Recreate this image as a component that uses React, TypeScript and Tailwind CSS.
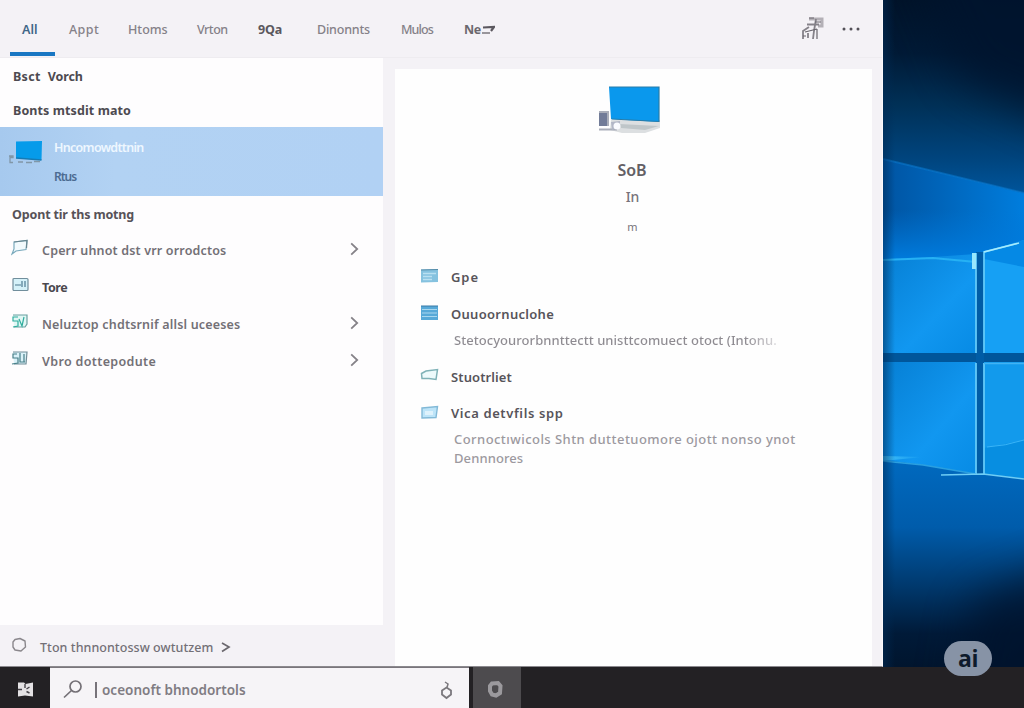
import React from 'react';
import clsx from 'clsx';

const tabs = [
  { label: 'All', cls: 'w-[45px] pl-[12px] text-[#3f6788] font-semibold', active: true },
  { label: 'Appt', cls: 'w-[59px] font-medium text-[#858188] tracking-[0.4px]' },
  { label: 'Htoms', cls: 'w-[69px] font-medium text-[#858188] tracking-[0px]' },
  { label: 'Vrton', cls: 'w-[61px] font-medium text-[#858188] tracking-[-0.5px]' },
  { label: '9Qa', cls: 'w-[59px] text-[#5b585e] font-bold tracking-[-0.2px]' },
  { label: 'Dinonnts', cls: 'w-[84px] font-medium text-[#858188] tracking-[-0.2px]' },
  { label: 'Mulos', cls: 'w-[63px] font-medium text-[#858188] tracking-[-0.9px]' },
];

type IconKind = 'flag' | 'panel' | 'sync' | 'disk';

const RowIcon: React.FC<{ kind: IconKind }> = ({ kind }) => (
  <svg width="18" height="18" viewBox="0 0 18 18" fill="none" strokeWidth="1.2" className="shrink-0">
    {kind === 'flag' && (
      <>
        <path d="M3 3 L16 1.5 L15 10.5 L5 12 L1 15 L3 10 Z" fill="#f2fafd" stroke="#7aaabd" />
        <path d="M3 3L16 1.5L15.5 9" stroke="#68858f" />
      </>
    )}
    {kind === 'panel' && (
      <>
        <rect x="2" y="2.5" width="15" height="12" rx="1" fill="#d5f1f9" stroke="#718e9c" />
        <path d="M4 9h6M11 5v6M14 5v6" stroke="#4e7a90" />
      </>
    )}
    {kind === 'sync' && (
      <>
        <path d="M2 2h14v9l-2 3H3" fill="#e1f7f5" stroke="#69a09f" />
        <path d="M7 4H2v4h5v5l-5 1M8 6l3 7 2-9" stroke="#2fad9d" />
      </>
    )}
    {kind === 'disk' && (
      <>
        <path d="M2 2h14l-1 12H3" fill="#daf1f8" stroke="#718d97" />
        <path d="M6 4H2v4h5v5l-6 1M9 3v9h5M13 4v8" stroke="#477f88" />
      </>
    )}
  </svg>
);

const Chevron: React.FC = () => (
  <svg width="9" height="14" viewBox="0 0 9 14" fill="none" stroke="#858288" strokeWidth="1.8" className="shrink-0">
    <path d="M1.2 1.3L7.2 7L1.2 12.7" />
  </svg>
);

const suggestions: { label: string; icon: IconKind; arrow: boolean; cls: string }[] = [
  { label: 'Cperr uhnot dst vrr orrodctos', icon: 'flag', arrow: true, cls: 'font-semibold text-[#737076] tracking-[0.17px] -ml-px' },
  { label: 'Tore', icon: 'panel', arrow: false, cls: 'font-bold text-[#4b484e] tracking-[-0.4px]' },
  { label: 'Neluztop chdtsrnif allsl uceeses', icon: 'sync', arrow: true, cls: 'font-semibold text-[#737076] tracking-[0.18px]' },
  { label: 'Vbro dottepodute', icon: 'disk', arrow: true, cls: 'font-semibold text-[#737076] tracking-[0.35px]' },
];

const ResultsPane: React.FC = () => (
  <section className="flex w-[383px] shrink-0 flex-col bg-[#f4f2f6]">
    <div className="flex-1 bg-[#fefdfe]">
      <h2 className="flex h-[35px] items-center gap-[7px] pt-[3px] pl-[13px] text-[12.5px] font-bold text-[#4d4a50]">
        <span className="tracking-[0.3px]">Bsct</span>
        <span className="tracking-[-0.1px]">Vorch</span>
      </h2>
      <h2 className="flex h-[34px] items-center pl-[13px] pt-[2px] text-[12.5px] font-bold text-[#4d4a50] tracking-[0.1px]">Bonts mtsdit mato</h2>
      <button className="flex h-[69px] w-[383px] bg-[linear-gradient(90deg,#a6c9ee,#b2d2f3_30%,#b1d1f4)] pl-[8px] text-left">
        <svg width="35" height="27" viewBox="0 0 35 27" className="mt-[12px] shrink-0">
          <path d="M8 2.5L34 2l-.5 19L8 19z" fill="#069bea" />
          <path d="M8 19l25.5 2" stroke="#157bb5" strokeWidth="1.5" />
          <path d="M1 17h4v1.5H2v5h3M10 23h5M18 23.5h6M26 22.5h6" fill="none" stroke="#8197a8" strokeWidth="1.3" />
        </svg>
        <span className="ml-[11px] flex flex-col">
          <span className="mt-[11px] h-[20px] text-[12.5px] leading-[19px] font-semibold text-[#eef7ff] tracking-[-0.7px]">Hncomowdttnin</span>
          <span className="mt-[9px] text-[12px] leading-[19px] font-semibold text-[#4c6b92] tracking-[-1px]">Rtus</span>
        </span>
      </button>
      <h2 className="flex h-[36px] items-center pt-[2px] pl-[12px] text-[12.5px] font-bold text-[#575258] tracking-[-0.15px]">Opont tir ths motng</h2>
      {suggestions.map(s => (
        <button key={s.label} className="flex h-[37px] w-full items-center pl-[11px] pr-[24px] text-left">
          <span className="pb-[5px]"><RowIcon kind={s.icon} /></span>
          <span className={clsx('ml-[13px] flex-1 pt-[2px] whitespace-nowrap text-[12.5px]', s.cls)}>{s.label}</span>
          {s.arrow && <span className="pb-[3px]"><Chevron /></span>}
        </button>
      ))}
    </div>
    <footer className="flex h-[41px] items-center pl-[11px] text-[12.5px] font-medium text-[#737076]">
      <svg width="17" height="17" viewBox="0 0 17 17" fill="none" stroke="#8a878c" strokeWidth="1.4" className="mb-px">
        <path d="M4 2.5L9 1.5L14 4L14.5 10L10 14L4 13L2 10L2 5Z" strokeLinejoin="round" />
      </svg>
      <span className="ml-[12px] w-[176px] pt-[5px] whitespace-nowrap tracking-[0.05px]">Tton thnnontossw owtutzem</span>
      <svg width="10" height="11" viewBox="0 0 10 11" fill="none" stroke="#6b686e" strokeWidth="1.7" className="mt-[3px] ml-[5px]">
        <path d="M1 1L8 5L1 9.5" />
      </svg>
    </footer>
  </section>
);

type ActionKind = 'window' | 'list' | 'tag' | 'card';

const ActionIcon: React.FC<{ kind: ActionKind }> = ({ kind }) => (
  <svg width="19" height="16" viewBox="0 0 19 16" fill="none" className="shrink-0">
    {kind === 'window' && (
      <>
        <path d="M1 1.5L18 1v13L1 14.5z" fill="#85c2df" />
        <path d="M1 2L18 1.5" stroke="#568ca9" />
        <path d="M3 5.5h13M3 8.5h9M3 11.5h9" stroke="#b9e0f1" strokeWidth="1.3" />
      </>
    )}
    {kind === 'list' && (
      <>
        <path d="M1 1h17v14H1z" fill="#57a9d8" />
        <path d="M1 1h17" stroke="#397ba6" />
        <path d="M2 4.5h15M2 8h15M2 11.5h15" stroke="#a9d8ef" strokeWidth="1.1" />
      </>
    )}
    {kind === 'tag' && (
      <path d="M1.5 5.5L6 3L17.5 1.5L16 11.5L9 10.5L2 10.5Z" fill="#edfafb" stroke="#7fb2b7" strokeWidth="1.5" />
    )}
    {kind === 'card' && (
      <>
        <path d="M2 3L17.5 1.5L16 12.5L2 13Z" fill="#bde4f8" stroke="#82b9d7" strokeWidth="1.4" />
        <path d="M5 6h8v4H5z" fill="#def2fc" />
      </>
    )}
  </svg>
);

const Action: React.FC<{ kind: ActionKind; label: string; cls: string; children?: React.ReactNode }> = ({ kind, label, cls, children }) => (
  <div className="pl-[25px]">
    <button className="flex h-[37px] items-center">
      <span className="pb-[4px]"><ActionIcon kind={kind} /></span>
      <span className={clsx('ml-[12px] whitespace-nowrap text-[13px] font-semibold text-[#57545a]', cls)}>{label}</span>
    </button>
    {children}
  </div>
);

const DetailsPane: React.FC = () => (
  <section className="mt-[11px] ml-[12px] w-[477px] bg-[#fefefe]">
    <div className="flex h-[190px] flex-col items-center">
      <svg width="64" height="50" viewBox="0 0 64 50" className="mt-[17px] mr-[7px]">
        <path d="M13 34h49v8l-15 5H24l-12-3z" fill="#dcdfe1" />
        <path d="M21 38L61 40L47 44L23 42z" fill="#bfc6c9" />
        <path d="M11 1h50v35l-48-3z" fill="#0a98ed" />
        <path d="M11 1h50v35M13.5 33l48 2.5" fill="none" stroke="#287ca9" strokeWidth="1.2" />
        <path d="M1 26h9v14H1z" fill="#727c98" />
        <path d="M1 26h9v14M1 43.5h18" fill="none" stroke="#aaaeb9" strokeWidth="2" />
        <path d="M13 36l9-1v6l-8 3z" fill="#b2b7c7" />
        <circle cx="19" cy="40" r="3.5" fill="#fafbff" />
      </svg>
      <span className="mt-[22px] mr-[3px] h-[25px] text-[16px] leading-[25px] font-semibold text-[#636065] tracking-[-0.1px]">SoB</span>
      <span className="mr-[2px] mt-[4px] h-[20px] text-[14px] leading-[20px] font-medium text-[#77737a]">In</span>
      <span className="mr-[2px] mt-[10px] text-[11px] leading-[20px] text-[#77737a]">m</span>
    </div>
    <Action kind="window" label="Gpe" cls="tracking-[0.9px]" />
    <Action kind="list" label="Ouuoornuclohe" cls="tracking-[0.3px]">
      <p className="-mt-[3px] h-[29px] w-[361px] whitespace-nowrap bg-[linear-gradient(90deg,#8e8b91_90%,#e6e5e8)] bg-clip-text pl-[34px] text-[13px] leading-[20px] font-medium text-transparent tracking-[0.05px]">
        Stetocyourorbnnttectt unisttcomuect otoct (Intonu.
      </p>
    </Action>
    <Action kind="tag" label="Stuotrliet" cls="tracking-[0.1px]" />
    <Action kind="card" label="Vica detvfils spp" cls="-mt-px tracking-[0.6px]">
      <p className="-mt-[3px] whitespace-nowrap pl-[34px] text-[13px] leading-[19px] font-medium text-[#9c999f]">
        <span className="tracking-[0.45px]">Cornoctıwicols Shtn duttetuomore ojott nonso ynot</span><br />
        <span className="tracking-[0.1px]">Dennnores</span>
      </p>
    </Action>
  </section>
);

const Wallpaper: React.FC = () => (
  <svg width="141" height="667" viewBox="0 0 141 667" className="shrink-0" preserveAspectRatio="none">
    <defs>
      <linearGradient id="sky" x1="0" y1="0" x2="0" y2="1">
        <stop offset="0" stopColor="#011329" />
        <stop offset=".08" stopColor="#001a36" />
        <stop offset=".16" stopColor="#003158" />
        <stop offset=".24" stopColor="#00457f" />
        <stop offset=".38" stopColor="#0072ce" />
        <stop offset=".7" stopColor="#0068bd" />
        <stop offset=".79" stopColor="#005cab" />
        <stop offset=".88" stopColor="#00386c" />
        <stop offset=".95" stopColor="#001a38" />
        <stop offset="1" stopColor="#00152e" />
      </linearGradient>
      <linearGradient id="beam" x1="0" y1="0" x2="1" y2="0">
        <stop offset="0" stopColor="#0054a2" />
        <stop offset="1" stopColor="#007ddd" />
      </linearGradient>
      <linearGradient id="fade" x1="0" y1="0" x2="0" y2="1">
        <stop offset="0" stopColor="#0075d6" stopOpacity="0" />
        <stop offset="1" stopColor="#007bdd" />
      </linearGradient>
      <linearGradient id="pane" x1="0" y1="0" x2="1" y2="1">
        <stop offset="0" stopColor="#067fd4" />
        <stop offset=".6" stopColor="#1197f0" />
        <stop offset="1" stopColor="#078be5" />
      </linearGradient>
      <linearGradient id="edge" x1="0" y1="0" x2="1" y2="0">
        <stop offset="0" stopColor="#002b55" stopOpacity=".55" />
        <stop offset="1" stopColor="#002b55" stopOpacity="0" />
      </linearGradient>
      <linearGradient id="shine" x1="0" y1="0" x2="1" y2="0">
        <stop offset="0" stopColor="#40c0fa" />
        <stop offset="1" stopColor="#40c0fa" stopOpacity="0" />
      </linearGradient>
      <filter id="soft" filterUnits="userSpaceOnUse" x="-150" y="-150" width="450" height="1000" colorInterpolationFilters="sRGB">
        <feGaussianBlur stdDeviation="22" />
      </filter>
      <filter id="line" filterUnits="userSpaceOnUse" x="-10" y="0" width="170" height="667">
        <feGaussianBlur stdDeviation=".6" />
      </filter>
    </defs>
    <rect width="141" height="667" fill="url(#sky)" />
    <path d="M20 -60H230V150L80 80Z" fill="#00142e" opacity=".85" filter="url(#soft)" />
    <path d="M220 550L90 600L70 720H220Z" fill="#00132d" opacity=".8" filter="url(#soft)" />
    <path d="M0 159L141 193V260H0Z" fill="url(#beam)" />
    <path d="M0 159L141 193" stroke="#0876ca" strokeWidth="2" opacity=".6" filter="url(#line)" />
    <rect y="210" width="141" height="50" fill="url(#fade)" />
    <path d="M0 259L50 257L93 254V353H0Z" fill="url(#pane)" />
    <path d="M101 252L141 240V353H101Z" fill="#16a0f4" />
    <path d="M101 252L141 240V267L101 259Z" fill="#0589e5" />
    <path d="M0 362H93V474L40 465L0 460Z" fill="url(#pane)" />
    <path d="M101 362H141V478L101 474Z" fill="#129aec" />
    <path d="M101 448L141 440V478L101 474Z" fill="#078ee1" />
    <path d="M0 353H141V362H0Z" fill="#00569b" />
    <path d="M93 252H101V475H93Z" fill="#005ca6" />
    <g fill="none" filter="url(#line)">
      <path d="M0 260L50 258L93 262" stroke="#26b1f4" strokeWidth="2" />
      <path d="M93 253V353M93 363V474M101 475V363M101 353V252L134 243.5" stroke="#62c9f9" strokeWidth="1.8" />
      <path d="M91 253V269" stroke="#99e8fd" strokeWidth="4" />
      <path d="M101 252L136 243" stroke="#a5ebfd" strokeWidth="1.5" />
      <path d="M101 363.5H141" stroke="#41b3f4" strokeWidth="1.5" />
      <path d="M104 447Q122 446 141 440" stroke="#39b4f8" />
      <path d="M0 461L40 465L93 474" stroke="#2a9fe0" strokeWidth="1.3" />
      <path d="M58 475L100 474L141 479" stroke="#6ecdf5" strokeWidth="1.5" />
    </g>
    <path d="M0 456L40 457L0 461Z" fill="url(#shine)" />
    <rect width="12" height="667" fill="url(#edge)" />
  </svg>
);

const Taskbar: React.FC = () => (
  <div className="flex h-[41px] bg-[#232124]">
    <button className="flex w-[50px] items-center justify-center pt-[3px]">
      <svg width="17" height="17" viewBox="0 0 17 17">
        <path d="M1 1.5H7L8.5 3L16 1.5V15.5L8 14.5L1 15.5Z" fill="#e4e2e4" />
        <path d="M1 8.5h4M8 3v4M9.5 8l3-2M9.5 10.5l3 1.5" stroke="#454248" strokeWidth="1.4" />
      </svg>
    </button>
    <div className="flex w-[419px] items-center border-t border-[#79757b] bg-[#f6f4f7] pt-[3px] pl-[12px] pr-[14px]">
      <svg width="21" height="21" viewBox="0 0 21 21" fill="none" stroke="#747076" strokeWidth="1.7">
        <circle cx="13.5" cy="7.5" r="5.5" />
        <path d="M9.5 11.5L2 18.5" />
      </svg>
      <span className="ml-[12px] h-[16px] w-[2px] bg-[#77737a]" />
      <span className="ml-[5px] flex-1 pt-[2px] whitespace-nowrap text-[13.5px] font-semibold text-[#807c83] tracking-[0.02px]">oceonoft bhnodortols</span>
      <svg width="16" height="20" viewBox="0 0 16 20" fill="none" stroke="#7b787d" strokeWidth="1.8">
        <path d="M7.5 7.5L12 10.5V14.5L7.500 18L3 14.5V10.5Z" />
        <path d="M8 7.5L9 4L6 2" strokeWidth="1.5" />
      </svg>
    </div>
    <button className="ml-[4px] flex w-[48px] items-center justify-center bg-[#4d4b4e] pt-[3px] pr-[3px]">
      <svg width="17" height="19" viewBox="0 0 17 19" fill="none">
        <path d="M5 3.5L11 3L13.5 6L13 13L9 15.5L5 14.5L3 11L3 6Z" stroke="#9b999d" strokeWidth="4" />
      </svg>
    </button>
  </div>
);

const App: React.FC = () => (
  <main className="relative flex h-[708px] w-[1024px] flex-col overflow-hidden font-['Noto_Sans','Open_Sans',sans-serif]">
    <div className="flex h-[667px]">
      <div className="flex w-[883px] flex-col border-r border-b border-r-[#fcf9fc] border-b-[#8b898e] bg-[#f4f2f6]">
        <header className="flex h-[58px] shrink-0 items-center border-b border-[#eeecf0] pl-[10px]">
          <nav className="flex h-full items-center">
            {tabs.map(t => (
              <button
                key={t.label}
                className={clsx('h-[54px] whitespace-nowrap text-left text-[12.5px]', t.cls, t.active ? 'mt-[1px] mr-[14px] border-b-4 border-[#1977c3] pt-[6px]' : 'pt-[4px]')}
              >
                {t.label}
              </button>
            ))}
            <button className="flex items-center pt-[3px] text-[12.5px] font-bold text-[#6b686e] tracking-[-0.5px]">
              Ne
              <svg width="13" height="10" viewBox="0 0 13 10" fill="none" stroke="#5b585f" className="ml-px">
                <path d="M1 2.5L12 2L9 6" strokeWidth="2.2" />
                <path d="M0 8h8" strokeWidth="1.2" />
              </svg>
            </button>
          </nav>
          <svg width="24" height="25" viewBox="0 0 24 25" fill="none" stroke="#858289" className="ml-auto">
            <path d="M9 3h13v7h-4" stroke="#b3b0b6" strokeWidth="3" />
            <path d="M7 8.500h12M16 3L14 15L13 23M3 23V15L9 11M8 22v-5" strokeWidth="1.8" />
            <path d="M5 16l12-3M17 13v10M9 2h5M15 6h6M3 20h3" stroke="#68656c" strokeWidth="1.2" />
          </svg>
          <svg width="18" height="4" viewBox="0 0 18 4" fill="#525057" className="ml-[18px] mr-[22px]">
            <circle cx="2" cy="2" r="1.5" /><circle cx="9" cy="2" r="1.5" /><circle cx="16" cy="2" r="1.5" />
          </svg>
        </header>
        <div className="flex min-h-0 flex-1">
          <ResultsPane />
          <DetailsPane />
        </div>
      </div>
      <Wallpaper />
    </div>
    <Taskbar />
    <div className="absolute top-[641px] left-[944px] flex h-[35px] w-[48px] items-center justify-center rounded-full bg-[#8793a6] pb-px font-['Open_Sans','Noto_Sans',sans-serif] text-[23px] font-bold text-[#0e1a2b] tracking-[-0.5px]">ai</div>
  </main>
);

export default App;
